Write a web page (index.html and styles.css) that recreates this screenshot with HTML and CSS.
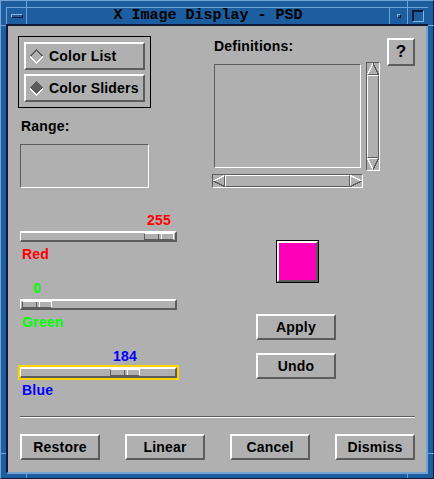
FILE: index.html
```html
<!DOCTYPE html>
<html>
<head>
<meta charset="utf-8">
<title>X Image Display - PSD</title>
<link rel="stylesheet" href="styles.css">
</head>
<body>
<div class="window">
  <div class="titlebar">
    <div class="tb-seg tb-menu"><span class="menu-icon"></span></div>
    <div class="tb-seg tb-title">X Image Display - PSD</div>
    <div class="tb-seg tb-min"><span class="min-icon"></span></div>
    <div class="tb-seg tb-max"><span class="max-icon"></span></div>
  </div>
  <div class="content">
    <div class="top">
      <div class="leftcol">
        <div class="radiobox">
          <div class="btn radio">
            <svg class="diamond" width="15" height="15" viewBox="0 0 15 15" shape-rendering="crispEdges">
              <polygon points="7.5,1 14,7.5 7.5,14 1,7.5" fill="#b0b0b0"/>
              <path d="M1 7.5 L7.5 1 L14 7.5" stroke="#5c5c5c" stroke-width="1.6" fill="none"/>
              <path d="M1 7.5 L7.5 14 L14 7.5" stroke="#ffffff" stroke-width="1.6" fill="none"/>
            </svg>
            <span>Color List</span>
          </div>
          <div class="btn radio">
            <svg class="diamond" width="15" height="15" viewBox="0 0 15 15" shape-rendering="crispEdges">
              <polygon points="7.5,1 14,7.5 7.5,14 1,7.5" fill="#5c5c5c"/>
              <path d="M1 7.5 L7.5 1 L14 7.5" stroke="#5c5c5c" stroke-width="1.6" fill="none"/>
              <path d="M1 7.5 L7.5 14 L14 7.5" stroke="#ffffff" stroke-width="1.6" fill="none"/>
            </svg>
            <span>Color Sliders</span>
          </div>
        </div>
        <div class="label range-label">Range:</div>
        <div class="sunken rangebox"></div>
      </div>
      <div class="rightcol">
        <div class="defcol">
          <div class="label def-label">Definitions:</div>
          <div class="listrow">
            <div class="sunken listbox"></div>
            <div class="sunken vscroll">
              <svg class="arrow" width="12" height="12" viewBox="0 0 12 12" shape-rendering="crispEdges">
                <polygon points="6,0.5 11.5,11.5 0.5,11.5" fill="#b0b0b0"/>
                <path d="M0.5 11.5 L6 0.5" stroke="#fff" fill="none"/>
                <path d="M6 0.5 L11.5 11.5 M0.5 11.5 H11.5" stroke="#5c5c5c" fill="none"/>
              </svg>
              <div class="sthumb"></div>
              <svg class="arrow" width="12" height="12" viewBox="0 0 12 12" shape-rendering="crispEdges">
                <polygon points="0.5,0.5 11.5,0.5 6,11.5" fill="#b0b0b0"/>
                <path d="M6 11.5 L0.5 0.5 H11.5" stroke="#fff" fill="none"/>
                <path d="M11.5 0.5 L6 11.5" stroke="#5c5c5c" fill="none"/>
              </svg>
            </div>
          </div>
          <div class="sunken hscroll">
            <svg class="arrow" width="12" height="12" viewBox="0 0 12 12" shape-rendering="crispEdges">
              <polygon points="0.5,6 11.5,0.5 11.5,11.5" fill="#b0b0b0"/>
              <path d="M0.5 6 L11.5 0.5" stroke="#fff" fill="none"/>
              <path d="M0.5 6 L11.5 11.5 M11.5 0.5 V11.5" stroke="#5c5c5c" fill="none"/>
            </svg>
            <div class="sthumb"></div>
            <svg class="arrow" width="12" height="12" viewBox="0 0 12 12" shape-rendering="crispEdges">
              <polygon points="11.5,6 0.5,0.5 0.5,11.5" fill="#b0b0b0"/>
              <path d="M0.5 11.5 V0.5 L11.5 6" stroke="#fff" fill="none"/>
              <path d="M11.5 6 L0.5 11.5" stroke="#5c5c5c" fill="none"/>
            </svg>
          </div>
        </div>
        <div class="btn helpbtn">?</div>
      </div>
    </div>

    <div class="mid">
      <div class="sliders">
        <div class="scale red">
          <div class="value" style="margin-left:126px">255</div>
          <div class="hl"><div class="trough"><div class="thumb" style="left:123px"></div></div></div>
          <div class="name">Red</div>
        </div>
        <div class="scale green">
          <div class="value" style="margin-left:4px">0</div>
          <div class="hl"><div class="trough"><div class="thumb" style="left:1px"></div></div></div>
          <div class="name">Green</div>
        </div>
        <div class="scale blue">
          <div class="value" style="margin-left:92px">184</div>
          <div class="hl focus"><div class="trough"><div class="thumb" style="left:89px"></div></div></div>
          <div class="name">Blue</div>
        </div>
      </div>
      <div class="actions">
        <div class="swatch"><div class="swatch-inner" style="background:rgb(255,0,184)"></div></div>
        <div class="btn action apply">Apply</div>
        <div class="btn action undo">Undo</div>
      </div>
    </div>

    <div class="separator"></div>

    <div class="buttons">
      <div class="btn">Restore</div>
      <div class="btn">Linear</div>
      <div class="btn">Cancel</div>
      <div class="btn">Dismiss</div>
    </div>
  </div>

  <span class="mark mv m-tl"></span>
  <span class="mark mv m-tr"></span>
  <span class="mark mv m-bl"></span>
  <span class="mark mv m-br"></span>
  <span class="mark mh m-lt"></span>
  <span class="mark mh m-rt"></span>
  <span class="mark mh m-lb"></span>
  <span class="mark mh m-rb"></span>
</div>
</body>
</html>
```

FILE: styles.css
```css
* { box-sizing: border-box; margin: 0; padding: 0; }

html, body {
  width: 434px;
  height: 479px;
  overflow: hidden;
  background: #1c5e9f;
}

body {
  font-family: "Liberation Sans", Arial, sans-serif;
  font-weight: bold;
  font-size: 14px;
  letter-spacing: 0.2px;
  color: #000;
}

.window {
  position: relative;
  width: 434px;
  height: 479px;
  background: #1c5e9f;
  border: 1px solid;
  border-color: #74a3d3 #141838 #141838 #74a3d3;
  padding: 6px 5px 4px 5px;
  display: flex;
  flex-direction: column;
}

/* ---------- title bar ---------- */
.titlebar {
  display: flex;
  height: 19px;
  flex: none;
  border-top: 1px solid #74a3d3;
  border-bottom: 2px solid #141838;
}

.tb-seg {
  height: 16px;
  border-left: 1px solid #74a3d3;
  display: flex;
  align-items: center;
  justify-content: center;
}

.tb-menu { width: 20px; }
.tb-min { width: 18px; }
.tb-max { width: 21px; }

.tb-title {
  flex: 1;
  font-family: "Liberation Mono", "DejaVu Sans Mono", monospace;
  font-size: 15px;
  font-weight: bold;
  letter-spacing: 0;
  color: #000;
  line-height: 16px;
}

.menu-icon {
  display: block;
  width: 12px;
  height: 4px;
  border: 1px solid;
  border-color: #8db6de #141838 #141838 #8db6de;
}

.min-icon {
  display: block;
  width: 4px;
  height: 4px;
  border: 1px solid;
  border-color: #8db6de #141838 #141838 #8db6de;
  margin-left: 1px;
}

.max-icon {
  display: block;
  width: 12px;
  height: 12px;
  border: 1px solid;
  border-color: #141838 #8db6de #8db6de #141838;
  box-shadow: inset 1px 1px 0 #141838;
}

/* ---------- client area ---------- */
.content {
  flex: 1;
  background: #b0b0b0;
  border-left: 2px solid #141838;
  border-right: 2px solid #74a3d3;
  border-bottom: 2px solid #74a3d3;
  padding: 10px 0 0 10px;
}

.label { line-height: 16px; }

.btn {
  background: #b0b0b0;
  border: 2px solid;
  border-color: #ffffff #5c5c5c #5c5c5c #ffffff;
  display: flex;
  align-items: center;
  justify-content: center;
  line-height: 16px;
}

.sunken {
  border: 1px solid;
  border-color: #5c5c5c #ffffff #ffffff #5c5c5c;
}

.top { display: flex; }

.leftcol { width: 133px; flex: none; }

.radiobox {
  border: 1px solid #000;
  padding: 5px;
  height: 72px;
  display: flex;
  flex-direction: column;
  gap: 4px;
}

.radio {
  height: 28px;
  justify-content: flex-start;
  padding-left: 3px;
  gap: 5px;
}

.diamond { display: block; flex: none; }

.range-label { margin: 10px 0 0 3px; }

.rangebox {
  margin: 10px 0 0 2px;
  width: 129px;
  height: 44px;
}

.rightcol {
  display: flex;
  align-items: flex-start;
  margin-left: 61px;
  padding-top: 2px;
}

.defcol { width: 168px; }

.def-label { padding-left: 2px; height: 24px; }

.listrow { display: flex; align-items: flex-start; }

.listbox {
  margin: 2px 0 0 2px;
  width: 147px;
  height: 104px;
}

.vscroll {
  margin-left: 5px;
  width: 14px;
  height: 109px;
  display: flex;
  flex-direction: column;
}

.hscroll {
  margin-top: 3px;
  width: 151px;
  height: 14px;
  display: flex;
}

.arrow { display: block; flex: none; }

.sthumb {
  flex: 1;
  border: 1px solid;
  border-color: #ffffff #5c5c5c #5c5c5c #ffffff;
}

.helpbtn {
  margin-left: 7px;
  width: 28px;
  height: 28px;
  font-size: 17px;
}

/* ---------- sliders ---------- */
.mid { display: flex; margin-top: 24px; }

.sliders {
  width: 161px;
  flex: none;
  display: flex;
  flex-direction: column;
  gap: 18px;
}

.value {
  width: 30px;
  height: 17px;
  line-height: 17px;
  text-align: center;
}

.hl {
  height: 15px;
  border: 2px solid transparent;
}

.hl.focus { border-color: #ffd400; }

.trough {
  position: relative;
  height: 11px;
  border-style: solid;
  border-width: 2px 2px 2px 1px;
  border-color: #ffffff #5c5c5c #5c5c5c #ffffff;
}

.thumb {
  position: absolute;
  top: 0;
  width: 30px;
  height: 7px;
  border: 1px solid;
  border-color: #ffffff #ffffff #5c5c5c #5c5c5c;
}

.thumb::after {
  content: "";
  position: absolute;
  left: 13px;
  top: 0;
  width: 2px;
  height: 5px;
  border-left: 1px solid #5c5c5c;
  border-right: 1px solid #ffffff;
}

.name { margin: 2px 0 0 4px; line-height: 16px; }

.red .value, .red .name { color: #ff0000; }
.green .value, .green .name { color: #00ff00; }
.blue .value, .blue .name { color: #0000ff; }

.actions {
  margin-left: 77px;
  width: 80px;
  display: flex;
  flex-direction: column;
  align-items: flex-start;
}

.swatch {
  margin: 28px 0 0 20px;
  width: 43px;
  height: 43px;
  border: 1px solid #000;
}

.swatch-inner {
  width: 100%;
  height: 100%;
  border: 2px solid;
  border-color: #ffffff #5c5c5c #5c5c5c #ffffff;
}

.action { width: 80px; height: 26px; }
.apply { margin-top: 31px; }
.undo { margin-top: 13px; }

.separator {
  margin: 18px 0 0 2px;
  width: 395px;
  height: 2px;
  border-top: 1px solid #5c5c5c;
  border-bottom: 1px solid #ffffff;
}

.buttons {
  display: flex;
  gap: 25px;
  margin: 16px 0 0 2px;
}

.buttons .btn { width: 80px; height: 26px; }

/* ---------- frame corner marks ---------- */
.mark { position: absolute; background: #74a3d3; }
.mv { width: 1px; }
.mh { height: 1px; width: 6px; }
.m-tl { top: -1px; left: 25px; height: 7px; }
.m-tr { top: -1px; left: 406px; height: 7px; }
.m-bl { bottom: 0; left: 25px; height: 4px; }
.m-br { bottom: 0; left: 406px; height: 4px; }
.m-lt { left: -1px; top: 24px; }
.m-rt { right: -1px; top: 24px; }
.m-lb { left: -1px; top: 452px; }
.m-rb { right: -1px; top: 452px; }
```
